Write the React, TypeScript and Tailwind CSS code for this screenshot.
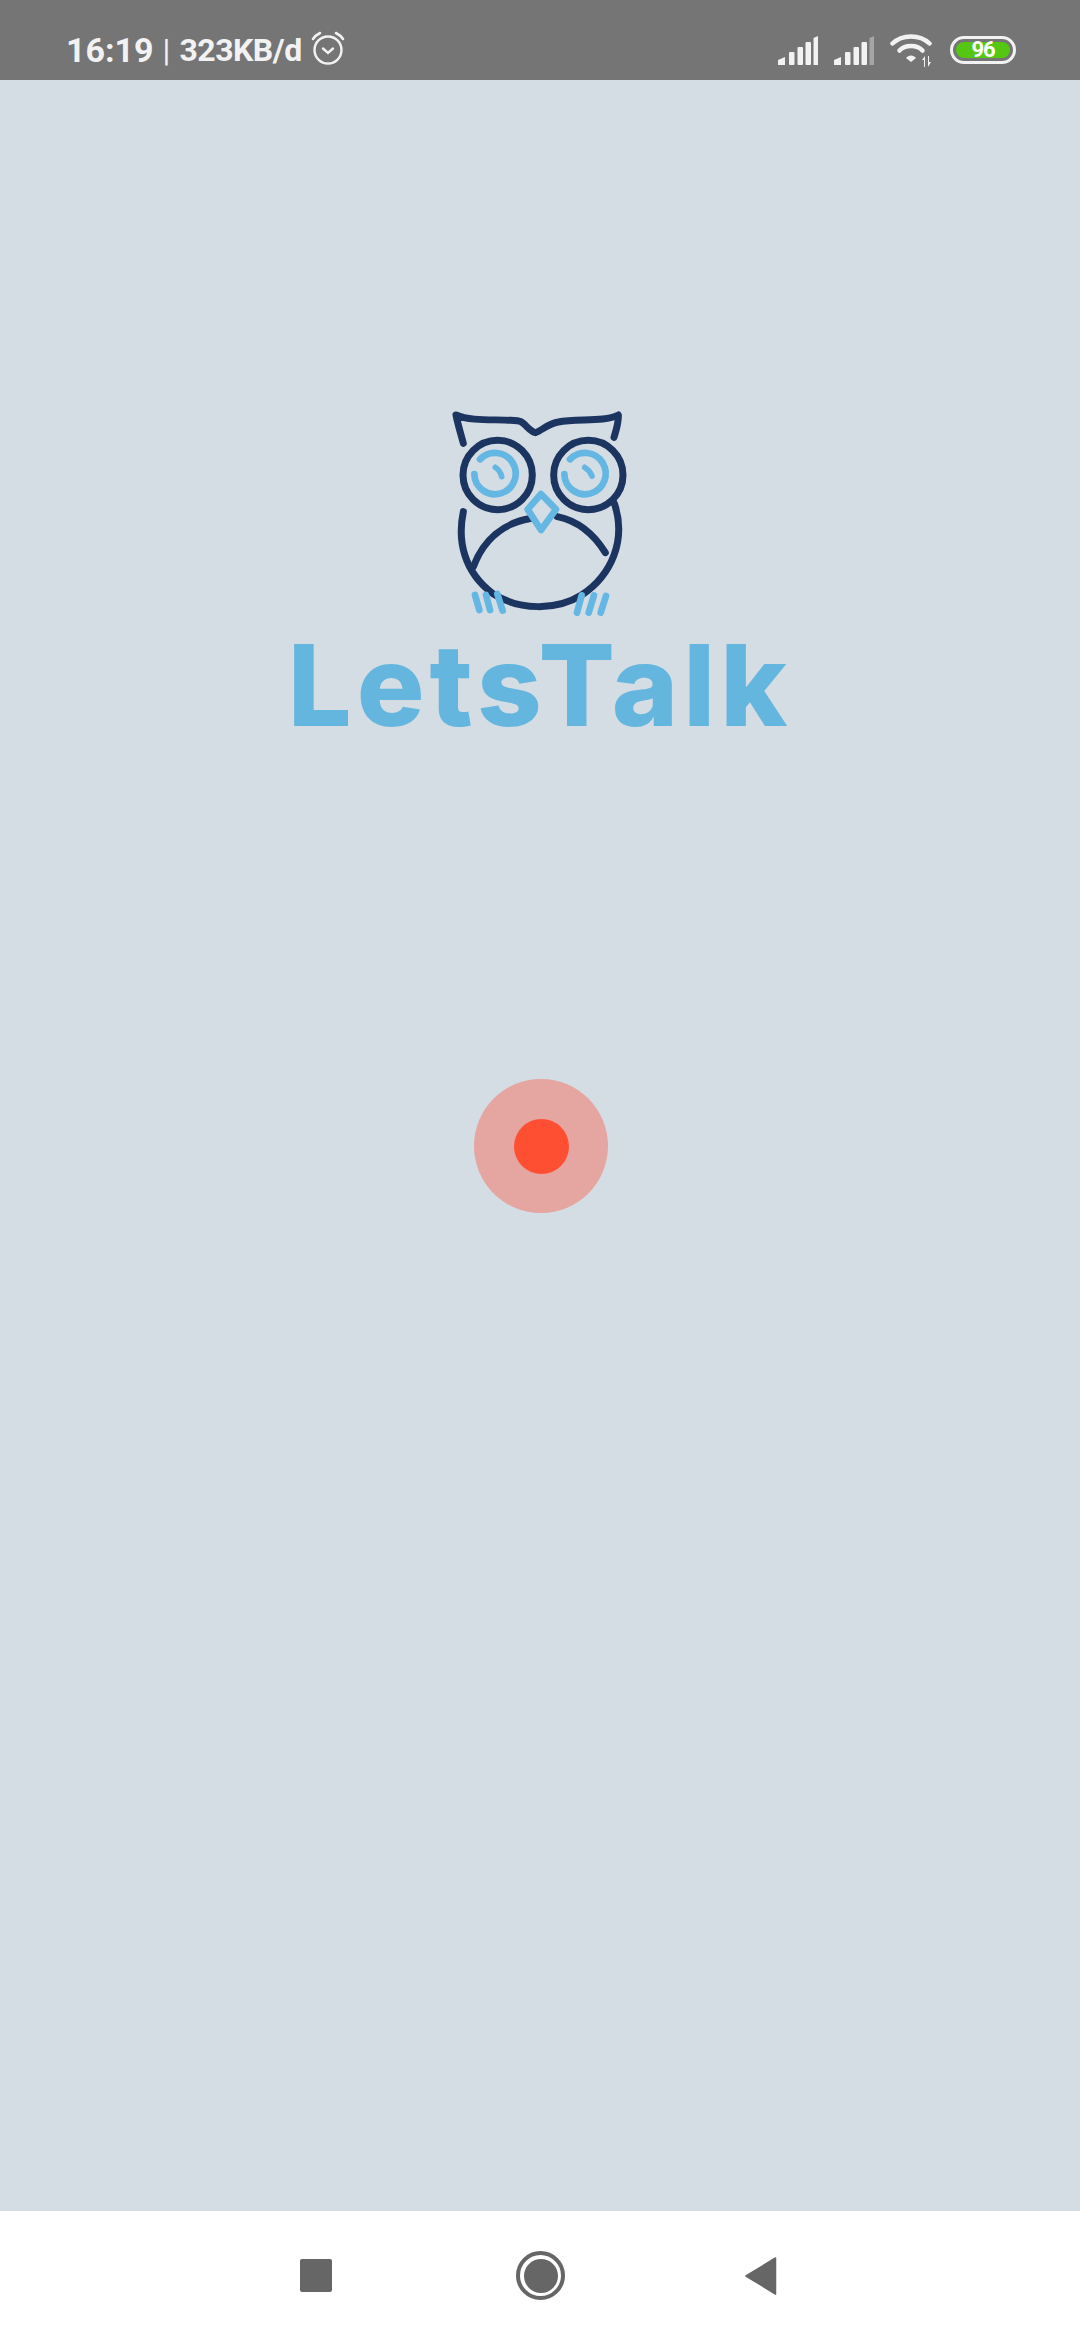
function Signal({ weak }: { weak?: boolean }) {
  return (
    <svg viewBox="0 0 40 29" className="w-10 h-[29px]">
      <path d="M0 29V24L7 21V29Z" fill="#f2f2f2" />
      <rect x="11" y="16" width="5.5" height="13" rx="1" fill="#f2f2f2" />
      <rect x="19.5" y="11" width="5.5" height="18" rx="1" fill="#f2f2f2" />
      <rect x="27.5" y="6" width="5.5" height="23" rx="1" fill="#f2f2f2" />
      <path d="M35.5 2L40 0V29H35.5Z" fill={weak ? "#a5a5a5" : "#f2f2f2"} />
    </svg>
  );
}

function Wifi() {
  return (
    <svg viewBox="0 0 44 34" className="w-11 h-[34px]">
      <g fill="none" stroke="#f2f2f2" strokeWidth="4.5" strokeLinecap="round">
        <path d="M2.5 10.5C12 1 30 1 39.5 10.5" />
        <path d="M9.5 17.5C15 11.5 27 11.5 32.5 17.5" />
      </g>
      <path d="M16 25C18.5 21.5 23.5 21.5 26 25L21 29Z" fill="#f2f2f2" />
      <path d="M34 34V27H32L35 23V34ZM38 23V34L41 29H39V23Z" fill="#f2f2f2" />
    </svg>
  );
}

function Alarm() {
  return (
    <svg viewBox="0 0 36 36" className="w-9 h-9">
      <g fill="none" stroke="#f2f2f2" strokeLinecap="round">
        <circle cx="18" cy="20" r="13.5" strokeWidth="2.4" />
        <path d="M13 18.5L18 23L23 18.5" strokeWidth="2.4" />
        <path d="M3 9C5 6 7 4.5 10 3" strokeWidth="2.6" />
        <path d="M33 9C31 6 29 4.5 26 3" strokeWidth="2.6" />
      </g>
    </svg>
  );
}

function Owl() {
  return (
    <svg viewBox="0 0 660 720" className="w-[220px] h-[240px] blur-[0.6px]">
      <g fill="none" stroke="#1c3560" strokeWidth="21" strokeLinecap="round" strokeLinejoin="round">
        <path d="M100 160C92 130 84 105 78 75C130 98 220 84 270 94C285 100 300 125 316 128C335 122 355 100 385 96C440 84 520 98 565 75C566 100 558 122 552 142" />
        <circle cx="203" cy="255" r="104" />
        <circle cx="475" cy="255" r="104" />
        <path d="M100 365C82 450 100 545 190 612C270 662 380 662 455 615C545 555 590 450 553 340" />
        <path d="M130 530C160 450 220 398 305 385" />
        <path d="M382 380C440 392 490 430 526 488" />
      </g>
      <g fill="none" stroke="#63b7e2" strokeWidth="20" strokeLinecap="round" strokeLinejoin="round">
        <path d="M133 252A62 62 0 1 0 150 208" />
        <path d="M403 252A62 62 0 1 0 420 208" />
        <path d="M196 232C206 238 212 248 215 260" strokeWidth="17" />
        <path d="M464 232C474 238 482 248 486 258" strokeWidth="17" />
        <path d="M333 312L378 358L333 420L293 358Z" />
        <path d="M135 615L148 660M168 615L180 660M202 612L218 662" />
        <path d="M455 616L441 668M492 616L476 668M528 618L512 668" />
      </g>
    </svg>
  );
}

export default function App() {
  return (
    <div className="w-[1080px] h-[2340px] flex flex-col bg-[#d4dce4] font-['Roboto',sans-serif] overflow-hidden">
      {/* status bar */}
      <div className="h-20 shrink-0 bg-[#757575] flex items-center justify-between pl-[66px] pr-[64px] pt-[24px] pb-[4px] text-[#f2f2f2]">
        <div className="flex items-center font-bold">
          <span className="text-[34px] leading-none">16:19</span>
          <span className="text-[32px] leading-none ml-[9px] font-normal">|</span>
          <span className="text-[32px] leading-none ml-[9px] tracking-[-0.5px]">323KB/d</span>
          <span className="ml-[8px] -mt-1">
            <Alarm />
          </span>
        </div>
        <div className="flex items-center">
          <Signal />
          <span className="ml-4">
            <Signal weak />
          </span>
          <span className="ml-4">
            <Wifi />
          </span>
          <div className="ml-4 w-[66px] h-7 rounded-full border-[3px] border-[#f2f2f2] p-[3px]">
            <div className="h-full rounded-full bg-[#55c612] flex items-center justify-center text-white text-[22px] leading-none font-bold tracking-[-1px]">
              96
            </div>
          </div>
        </div>
      </div>

      {/* splash */}
      <div className="flex-1 flex flex-col items-center pt-[310px]">
        <Owl />
        <div className="mt-[-15px] h-[140px] font-['Inter',sans-serif] font-extrabold text-[113px] leading-[140px] text-[#65b6de] tracking-[5px] blur-[0.5px]">
          LetsTalk
        </div>
        <div className="mt-[324px] ml-[2px] w-[134px] h-[134px] rounded-full bg-[#e5a5a1] flex items-center justify-center">
          <div className="w-[55px] h-[55px] rounded-full bg-[#ff4f33]" />
        </div>
      </div>

      {/* nav bar */}
      <div className="h-[129px] shrink-0 bg-white flex items-center pl-[300px]">
        <div className="w-8 h-[33px] rounded-[2px] bg-[#666666]" />
        <div className="ml-[184px] w-[49px] h-[49px] rounded-full border-[4px] border-[#666666] flex items-center justify-center">
          <div className="w-[34px] h-[34px] rounded-full bg-[#666666]" />
        </div>
        <svg viewBox="0 0 32 38" className="ml-[180px] w-8 h-[38px]">
          <path d="M30.5 1L1 19L30.5 37Z" fill="#666666" stroke="#666666" strokeWidth="1.5" strokeLinejoin="round" />
        </svg>
      </div>
    </div>
  );
}
